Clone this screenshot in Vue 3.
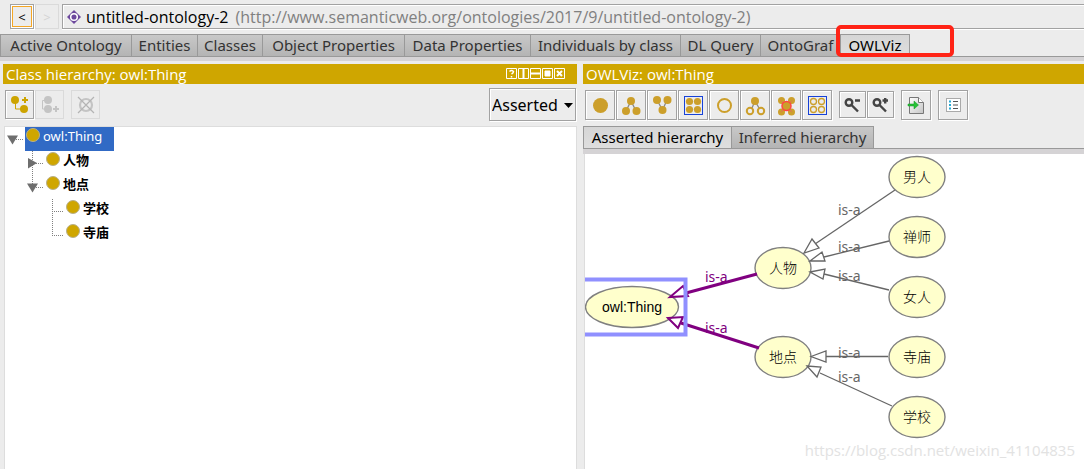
<script setup>
import { ref } from 'vue'

const tabs = ['Active Ontology', 'Entities', 'Classes', 'Object Properties', 'Data Properties', 'Individuals by class', 'DL Query', 'OntoGraf', 'OWLViz']
const activeTab = ref('OWLViz')
const vizTabs = ['Asserted hierarchy', 'Inferred hierarchy']
const activeVizTab = ref('Asserted hierarchy')
const mode = ref('Asserted')

const rows = [
  { label: 'owl:Thing', level: 0, toggle: 'open', selected: true },
  { label: '人物', level: 1, toggle: 'closed', guide: 24 },
  { label: '地点', level: 1, toggle: 'open', guide: 12 },
  { label: '学校', level: 2, guide: 24 },
  { label: '寺庙', level: 2, guide: 12 },
]

const nodes = [
  { label: '人物', x: 198, y: 114 },
  { label: '地点', x: 198, y: 203 },
  { label: '男人', x: 332, y: 23 },
  { label: '禅师', x: 332, y: 83 },
  { label: '女人', x: 332, y: 143 },
  { label: '寺庙', x: 332, y: 203 },
  { label: '学校', x: 332, y: 263 },
]

const edges = [
  { line: 'M310 36L230 90', head: '219,99 227,85 234,94', x: 253, y: 61 },
  { line: 'M304 87L239 103', head: '225,107 237,98 240,107', x: 253, y: 98 },
  { line: 'M304 136L239 120', head: '225,118 240,115 238,125', x: 253, y: 127 },
  { line: 'M303 202.500L241 202.500', head: '226,202.500 241,197 241,208', x: 253, y: 204 },
  { line: 'M307 252L235 219', head: '222,212 236,213 232,223', x: 253, y: 228 },
  { line: 'M172 120L101 139', head: '85,143 98,132 103,142', x: 120, y: 128, strong: true },
  { line: 'M174 194L96 169', head: '83,164 98,163 93,174', x: 120, y: 179, strong: true },
]
</script>

<template>
  <div class="app">
    <header class="location">
      <button class="nav back" aria-label="Back">&lt;</button>
      <button class="nav" aria-label="Forward" disabled>&gt;</button>
      <div class="address">
        <svg width="14" height="14" viewBox="0 0 14 14" aria-hidden="true">
          <path d="M7 0L14 7L7 14L0 7Z" fill="#6d489d" />
          <circle cx="7" cy="7" r="3.300" fill="#6d489d" stroke="#fff" stroke-width="1.500" />
        </svg>
        <strong>untitled-ontology-2</strong>
        <span>(http://www.semanticweb.org/ontologies/2017/9/untitled-ontology-2)</span>
      </div>
    </header>

    <nav class="tabs main-tabs" role="tablist">
      <button v-for="t in tabs" :key="t" role="tab" class="tab" :class="{ active: t === activeTab }" :aria-selected="t === activeTab" @click="activeTab = t">{{ t }}</button>
      <span class="marker" aria-hidden="true"></span>
    </nav>

    <main class="panels">
      <section class="panel">
        <h2 class="title">
          <span>Class hierarchy: owl:Thing</span>
          <svg class="window-icons" width="60" height="12" viewBox="0 0 60 12" fill="none" stroke="#fff" aria-hidden="true">
            <path d="M.5.5h10v10H.5zM12.500.5h10v10h-10zM24.500.5h10v10h-10zM36.500.5h10v10h-10zM48.500.5h10v10h-10z" />
            <path d="M3.500 3.500Q5.500 1.500 7.500 3.500Q7.500 5 5.500 6.200M5.500 8v1.500" stroke-width="1.500" />
            <path d="M17.500 1v9M25 5.500h9" stroke-width="2" />
            <path d="M39 3h5v5h-5z" fill="#fff" />
            <path d="M51 3l5 5M56 3l-5 5" stroke-width="2" />
          </svg>
        </h2>
        <div class="toolbar left-tools">
          <button class="tool small" aria-label="Add subclass">
            <svg width="27" height="27" viewBox="1 1 27 27">
              <path d="M10.500 10v9h9" fill="none" stroke="#cda400" />
              <circle cx="10" cy="10" r="4" fill="#cda400" /><circle cx="19" cy="19" r="4" fill="#cda400" />
              <path d="M17 10h6M20 7v6" stroke="#cda400" stroke-width="2" />
            </svg>
          </button>
          <button class="tool small" aria-label="Add sibling class" disabled>
            <svg width="27" height="27" viewBox="1 1 27 27">
              <path d="M13 10.500H7.500v8.500H13" fill="none" stroke="#c4c4c4" />
              <circle cx="13" cy="10" r="4" fill="#c4c4c4" /><circle cx="13" cy="19" r="4" fill="#c4c4c4" />
              <path d="M18 19h6M21 16v6" stroke="#c4c4c4" stroke-width="2" />
            </svg>
          </button>
          <button class="tool small apart" aria-label="Delete class" disabled>
            <svg width="27" height="27" viewBox="1 1 27 27" fill="none" stroke="#c4c4c4">
              <circle cx="15" cy="15" r="6" stroke-width="2.200" />
              <path d="M7 7l16 16M23 7L7 23" stroke="#b4b4b4" stroke-width="1.200" />
            </svg>
          </button>
          <label class="mode">
            <select v-model="mode" aria-label="Hierarchy mode">
              <option>Asserted</option>
              <option>Inferred</option>
            </select>
            <svg width="9" height="5" viewBox="0 0 9 5" aria-hidden="true"><path d="M0 0h9L4.500 5z" /></svg>
          </label>
        </div>
        <ul class="tree">
          <li v-for="r in rows" :key="r.label" :class="'level' + r.level">
            <component :is="r.toggle ? 'button' : 'span'" class="gutter" :aria-label="r.toggle ? 'Toggle ' + r.label : undefined">
              <svg width="20" height="24" viewBox="0 0 20 24" aria-hidden="true">
                <path v-if="r.guide" :d="'M7.500 0V' + r.guide" class="guide" />
                <path d="M7 12.500H19" class="guide" />
                <path v-if="r.toggle === 'open'" d="M2 8.500H13L7.500 17.500z" fill="#6e6e6e" />
                <path v-if="r.toggle === 'closed'" d="M3 7V17.500L12 12z" fill="#6e6e6e" />
              </svg>
            </component>
            <span class="entry" :class="{ selected: r.selected }"><i class="dot"></i>{{ r.label }}</span>
          </li>
        </ul>
      </section>

      <section class="panel">
        <h2 class="title"><span>OWLViz: owl:Thing</span></h2>
        <div class="toolbar right-tools">
          <button class="tool" aria-label="Show class">
            <svg width="28" height="28" viewBox="1 1 28 28"><circle cx="15.500" cy="15.500" r="7.500" class="gold" /></svg>
          </button>
          <button class="tool" aria-label="Show subclasses">
            <svg width="28" height="28" viewBox="1 1 28 28">
              <path d="M10 21L15 11L20 21" class="link" />
              <circle cx="15" cy="11" r="4" class="gold" /><circle cx="10" cy="21" r="4" class="gold" /><circle cx="20.500" cy="21" r="4" class="gold" />
            </svg>
          </button>
          <button class="tool" aria-label="Show superclasses">
            <svg width="28" height="28" viewBox="1 1 28 28">
              <path d="M10 10L15.500 20L20 10" class="link" />
              <circle cx="10" cy="10" r="4" class="gold" /><circle cx="20.500" cy="10" r="4" class="gold" /><circle cx="15.500" cy="20" r="4" class="gold" />
            </svg>
          </button>
          <button class="tool" aria-label="Show all classes">
            <svg width="28" height="28" viewBox="1 1 28 28">
              <rect x="6.500" y="6.500" width="18" height="18" class="box" />
              <circle cx="11.500" cy="11.500" r="3.600" class="gold" /><circle cx="19.500" cy="11.500" r="3.600" class="gold" />
              <circle cx="11.500" cy="19.500" r="3.600" class="gold" /><circle cx="19.500" cy="19.500" r="3.600" class="gold" />
            </svg>
          </button>
          <button class="tool" aria-label="Hide class">
            <svg width="28" height="28" viewBox="1 1 28 28"><circle cx="15.500" cy="15.500" r="6.500" class="ring" /></svg>
          </button>
          <button class="tool" aria-label="Hide subclasses">
            <svg width="28" height="28" viewBox="1 1 28 28">
              <path d="M12 18L15 11L19 18" class="link" />
              <circle cx="15" cy="11" r="4" class="gold" /><circle cx="10" cy="21" r="3.200" class="ring" /><circle cx="21" cy="21" r="3.200" class="ring" />
            </svg>
          </button>
          <button class="tool" aria-label="Hide classes past radius">
            <svg width="28" height="28" viewBox="1 1 28 28">
              <circle cx="10.500" cy="10.500" r="3.500" class="gold" /><circle cx="20.500" cy="10.500" r="3.500" class="gold" />
              <circle cx="10.500" cy="22" r="3.500" class="gold" /><circle cx="20.500" cy="22" r="3.500" class="gold" />
              <path d="M10 10.500L21 22M21 10.500L10 22" stroke="#e0705a" />
              <circle cx="15.500" cy="16" r="4.500" fill="#cc9f2b" stroke="#f44" stroke-width="1.500" />
            </svg>
          </button>
          <button class="tool" aria-label="Hide all classes">
            <svg width="28" height="28" viewBox="1 1 28 28">
              <rect x="6.500" y="6.500" width="18" height="18" class="box" />
              <g class="thin">
                <circle cx="11.500" cy="11.500" r="3" /><circle cx="19.500" cy="11.500" r="3" />
                <circle cx="11.500" cy="19.500" r="3" /><circle cx="19.500" cy="19.500" r="3" />
              </g>
            </svg>
          </button>
          <button class="tool zoom apart" aria-label="Zoom out">
            <svg width="25" height="25" viewBox="1 1 25 25" class="lens">
              <circle cx="10" cy="11.500" r="3.300" /><path d="M12.500 14L19 20.500M16 9.500H21" />
            </svg>
          </button>
          <button class="tool zoom" aria-label="Zoom in">
            <svg width="25" height="25" viewBox="1 1 25 25" class="lens">
              <circle cx="10" cy="11.500" r="3.300" /><path d="M12.500 14L19 20.500M15.500 9.500H21M18.200 7V12.500" />
            </svg>
          </button>
          <button class="tool apart" aria-label="Export image">
            <svg width="28" height="28" viewBox="1 1 28 28">
              <defs>
                <linearGradient id="sheet" x2="1" y2="1"><stop stop-color="#fff" /><stop offset="1" stop-color="#c4c4c4" /></linearGradient>
              </defs>
              <path d="M8.500 7.500h9l5 5v11h-14z" fill="url(#sheet)" stroke="#777" />
              <path d="M17.500 7.500v5h5" fill="#fff" stroke="#777" />
              <path d="M7 14h6v-3l4.500 4l-4.500 4V16H7z" fill="#26c236" stroke="#169426" stroke-width=".5" />
            </svg>
          </button>
          <button class="tool apart" aria-label="Options">
            <svg width="28" height="28" viewBox="1 1 28 28">
              <rect x="8.500" y="8.500" width="14" height="13" fill="#fff" stroke="#aaa" />
              <path d="M11 11.500h2M11 15h2M11 18.500h2" stroke="#26a9d4" stroke-width="2" />
              <path d="M15 11.500h5M15 15h5M15 18.500h5" stroke="#555" />
            </svg>
          </button>
        </div>
        <div class="tabs viz-tabs" role="tablist">
          <button v-for="t in vizTabs" :key="t" role="tab" class="tab" :class="{ active: t === activeVizTab }" :aria-selected="t === activeVizTab" @click="activeVizTab = t">{{ t }}</button>
        </div>
        <div class="canvas">
          <svg class="graph" width="499" height="315" role="img" aria-label="Class graph">
            <ellipse cx="47" cy="153" rx="46.500" ry="20.500" class="node" />
            <text x="47" y="158" class="node-text">owl:Thing</text>
            <g v-for="n in nodes" :key="n.label">
              <ellipse :cx="n.x" :cy="n.y" rx="28" ry="20.500" class="node" />
              <text :x="n.x" :y="n.y + 5" class="node-text">{{ n.label }}</text>
            </g>
            <g v-for="e in edges" :key="e.line" :class="['edge', { strong: e.strong }]">
              <path :d="e.line" />
              <polygon :points="e.head" />
              <text :x="e.x" :y="e.y">is-a</text>
            </g>
            <rect x="-10" y="125.500" width="110.500" height="55" class="focus" />
          </svg>
          <span class="watermark">https://blog.csdn.net/weixin_41104835</span>
        </div>
      </section>
    </main>
  </div>
</template>

<style>
body {
  background: #ececec;
}
</style>

<style scoped>
.app {
  display: flex;
  flex-direction: column;
  min-height: 100vh;
  overflow: hidden;
  color: #000;
  background: #ececec;
  font-family: "Noto Sans", "Noto Sans CJK SC", sans-serif;
  font-size: 15px;
}
button, select {
  margin: 0;
  padding: 0;
  border: 0;
  background: none;
  color: inherit;
  font: inherit;
}
svg {
  display: block;
}
.location {
  display: flex;
  gap: 1px;
  padding: 4px 0 5px 10px;
}
.nav {
  box-sizing: border-box;
  width: 24px;
  height: 25px;
  border: 1px solid #a2a2a2;
  box-shadow: inset 1px 1px #fff, 1px 1px #fff;
  font-size: 13px;
  line-height: 20px;
}
.back {
  box-shadow: inset 0 0 0 1px #fff, inset 0 0 0 2px #f5a623, 1px 1px #fff;
}
.nav:disabled {
  border-color: #dadada;
  color: #d4d4d4;
  box-shadow: none;
}
.address {
  box-sizing: border-box;
  display: flex;
  flex: 1;
  align-items: center;
  margin-left: 2px;
  height: 25px;
  padding-left: 4px;
  border: 1px solid #a2a2a2;
  border-right: 0;
  box-shadow: inset 1px 1px #fff, 0 1px #fff;
  font-family: "Open Sans", sans-serif;
  font-size: 16px;
  white-space: nowrap;
}
.address strong {
  margin: 0 7px 0 5px;
  font-weight: 400;
}
.address span {
  color: #808080;
}
.tabs {
  position: relative;
  display: grid;
  height: 22px;
  border-bottom: 1px solid #999;
  box-shadow: 0 4px #d5d3d5;
}
.main-tabs {
  grid-template-columns: 132px 66px 65px 142px 126px 150px 80px 80px 69px;
}
.tab {
  box-sizing: border-box;
  height: 22px;
  padding: 0 5px;
  border: 1px solid #999;
  border-width: 1px 1px 0 0;
  background: linear-gradient(#c8c8c8, #b4b4b4);
  color: #333;
  line-height: 21px;
  text-align: center;
  white-space: nowrap;
}
.tab:first-child {
  border-left-width: 1px;
}
.tab.active {
  background: linear-gradient(#d6d6d6, #dedede);
  color: #000;
}
.marker {
  position: absolute;
  left: 836px;
  top: -9px;
  width: 110px;
  height: 24px;
  border: 4px solid #ff2316;
  border-radius: 5px;
}
.panels {
  display: grid;
  flex: 1;
  grid-template-columns: 574fr 501fr;
  gap: 6px;
  padding: 7px 0 0 3px;
}
.panel {
  display: flex;
  flex-direction: column;
  min-width: 0;
}
.title {
  display: flex;
  align-items: center;
  justify-content: space-between;
  height: 20px;
  margin: 0;
  padding: 0 11px 0 3px;
  background: #cfa600;
  color: #fff;
  font-family: "Open Sans", sans-serif;
  font-size: 15px;
  font-weight: 400;
}
.toolbar {
  display: flex;
  height: 42px;
}
.left-tools {
  box-sizing: border-box;
  padding: 6px 1px 0 2px;
  gap: 1px;
}
.right-tools {
  box-sizing: border-box;
  padding: 6px 0 0 2px;
  gap: 1px;
}
.tool {
  box-sizing: border-box;
  width: 30px;
  height: 30px;
  border: 1px solid #a2a2a2;
  box-shadow: inset 1px 1px #fff, 1px 1px #fff;
}
.tool.small {
  width: 29px;
  height: 29px;
}
.tool.zoom {
  width: 27px;
  height: 27px;
  margin-top: 1px;
}
.tool:disabled {
  border-color: #dadada;
  box-shadow: none;
}
.apart {
  margin-left: 6px;
}
.mode {
  position: relative;
  margin: -2px 0 0 auto;
}
.mode select {
  box-sizing: border-box;
  width: 87px;
  height: 33px;
  padding-left: 2px;
  appearance: none;
  border: 1px solid #a2a2a2;
  border-radius: 0;
  box-shadow: inset 1px 1px #fff, 1px 1px #fff;
  font-size: 16px;
}
.mode svg {
  position: absolute;
  right: 3px;
  top: 15px;
}
.tree {
  flex: 1;
  margin: 0 0 0 1px;
  padding: 0;
  border: 1px solid #ddd;
  border-width: 1px 1px 0 1px;
  background: #fff;
  list-style: none;
}
.tree li {
  display: flex;
  height: 24px;
  font-weight: 700;
  font-size: 13px;
}
.tree .level0 {
  font-weight: 400;
}
.tree .level1 {
  padding-left: 20px;
}
.tree .level2 {
  padding-left: 40px;
}
.guide {
  fill: none;
  stroke: #808080;
  stroke-dasharray: 1 1;
}
.entry {
  display: flex;
  gap: 3px;
  padding: 1px 12px 0 1px;
  height: 23px;
  line-height: 16px;
}
.entry.selected {
  background: #316ac5;
  color: #fff;
}
.dot {
  box-sizing: border-box;
  width: 14px;
  height: 14px;
  border: 1px solid #b8b08a;
  border-radius: 50%;
  background: #cfa600;
}
.viz-tabs {
  grid-template-columns: 149px 142px;
  box-shadow: 0 5px #d5d3d5;
}
.canvas {
  position: relative;
  flex: 1;
  min-height: 315px;
  margin: 5px 0 0 1px;
  border-left: 1px solid #ddd;
  background: #fff;
  overflow: hidden;
}
.gold {
  fill: #cc9f2b;
}
.ring {
  fill: none;
  stroke: #cc9f2b;
  stroke-width: 2;
}
.thin {
  fill: none;
  stroke: #cc9f2b;
  stroke-width: 1.3;
}
.link {
  fill: none;
  stroke: #888;
  stroke-width: 1.3;
}
.box {
  fill: none;
  stroke: #1742d8;
}
.lens {
  fill: none;
  stroke: #444;
  stroke-width: 2.4;
}
.node {
  fill: #ffffcc;
  stroke: #808080;
  stroke-width: 1.4;
}
.node-text {
  font-family: "Liberation Sans", "Noto Sans CJK SC", sans-serif;
  font-size: 14px;
  font-weight: 300;
  text-anchor: middle;
}
.edge {
  fill: #666;
  font-size: 14px;
}
.edge path {
  stroke: #666;
  stroke-width: 1.3;
}
.edge polygon {
  fill: #fff;
  stroke: #666;
  stroke-width: 1.3;
}
.edge.strong {
  fill: #800080;
}
.edge.strong path, .edge.strong polygon {
  stroke: #800080;
  stroke-width: 3;
}
.edge.strong polygon {
  stroke-width: 2;
  fill: none;
}
.focus {
  fill: none;
  stroke: #9090ff;
  stroke-width: 4;
}
.watermark {
  position: absolute;
  right: 9px;
  bottom: 9px;
  color: #e2e2e2;
  font-family: "Open Sans", sans-serif;
  font-size: 15px;
}
</style>
